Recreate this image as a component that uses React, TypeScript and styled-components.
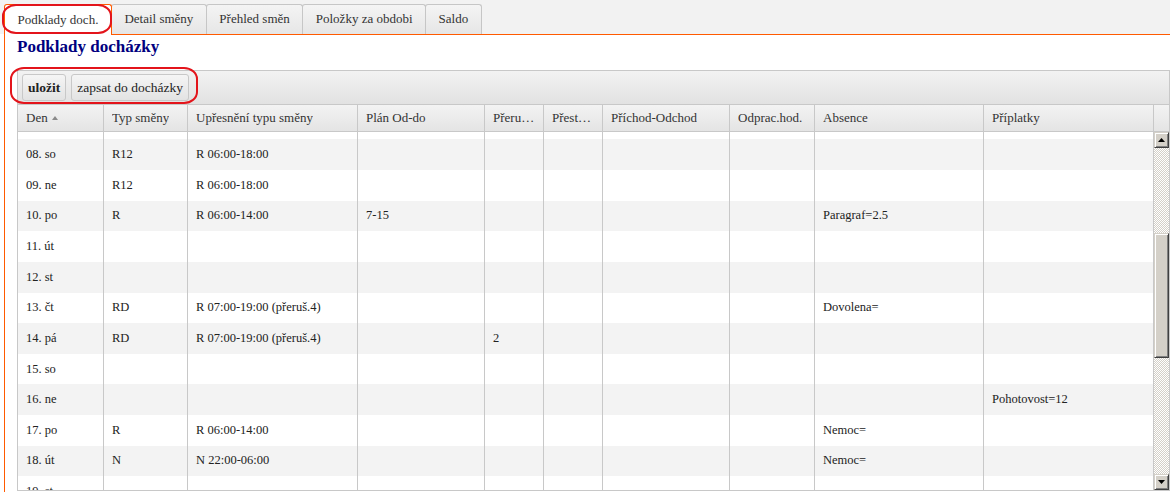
import React, { useLayoutEffect, useRef } from "react";
import styled, { createGlobalStyle } from "styled-components";

const ORANGE = "#ff5a00";
const LINE = "#c8c8c8";
const FONT = `"Liberation Serif", "Times New Roman", serif`;

const GlobalStyle = createGlobalStyle`
  html, body { margin: 0; padding: 0; background: #fff; }
  body { font-family: ${FONT}; color: #222; }
  * { box-sizing: border-box; }
`;

const Page = styled.div`
  position: relative;
  width: 1170px;
  height: 492px;
  overflow: hidden;
  display: flex;
  flex-direction: column;
`;

/* ---------- tabs ---------- */
const TabStrip = styled.div`
  display: flex;
  align-items: flex-end;
  padding: 4px 0 0 4px;
  background: #f2f2f2;
`;

const Tab = styled.div<{ $active?: boolean }>`
  position: relative;
  height: ${(p) => (p.$active ? 31 : 30)}px;
  margin-bottom: ${(p) => (p.$active ? -1 : 0)}px;
  margin-left: ${(p) => (p.$active ? 0 : -1)}px;
  padding: 0 12.5px 1px;
  display: flex;
  align-items: center;
  font-size: 13px;
  color: #333;
  white-space: nowrap;
  border: 1px solid ${(p) => (p.$active ? ORANGE : "#c6c6c6")};
  border-bottom: none;
  border-radius: 3px 3px 0 0;
  background: ${(p) => (p.$active ? "#fff" : "linear-gradient(#f4f4f4, #e6e6e6)")};
  z-index: ${(p) => (p.$active ? 2 : 1)};
  &:first-child { margin-left: 0; }
`;

/* ---------- content panel ---------- */
const Panel = styled.div`
  flex: 1;
  min-height: 0;
  margin-left: 4px;
  border-left: 1px solid ${ORANGE};
  border-top: 1px solid ${ORANGE};
  padding: 2px 0 0 12px;
  display: flex;
  flex-direction: column;
  background: #fff;
`;

const Title = styled.h1`
  margin: 0 0 13px;
  font-size: 17px;
  line-height: 20px;
  font-weight: bold;
  color: #000080;
`;

const Grid = styled.div`
  width: 1153px;
  height: 421px;
  border: 1px solid ${LINE};
  display: flex;
  flex-direction: column;
`;

const Toolbar = styled.div`
  height: 34px;
  padding: 3px 4px 0;
  border-bottom: 1px solid ${LINE};
  background: linear-gradient(#f2f2f2, #e2e2e2);
  display: flex;
  align-items: flex-start;
  gap: 5px;
`;

const Button = styled.button<{ $bold?: boolean }>`
  height: 27px;
  padding: 0 5px;
  border: 1px solid ${LINE};
  border-radius: 3px;
  background: linear-gradient(#f5f5f5, #e3e3e3);
  font-family: ${FONT};
  font-size: 13.5px;
  font-weight: ${(p) => (p.$bold ? "bold" : "normal")};
  color: #222;
  cursor: pointer;
`;

const COLS = "86px 84px 170px 127px 59px 59px 127px 85px 169px 170px";

const HeaderRow = styled.div`
  height: 27px;
  display: grid;
  grid-template-columns: ${COLS} 15px;
  border-bottom: 1px solid ${LINE};
  background: linear-gradient(#f3f3f3, #e4e4e4);
`;

const HeadCell = styled.div`
  border-right: 1px solid ${LINE};
  padding: 0 8px;
  display: flex;
  align-items: center;
  gap: 4px;
  min-width: 0;
  font-size: 13px;
  color: #333;
  &:last-child { border-right: none; }
`;

const HeadLabel = styled.span`
  overflow: hidden;
  white-space: nowrap;
  text-overflow: ellipsis;
`;

const Body = styled.div`
  flex: 1;
  min-height: 0;
  display: flex;
`;

const Rows = styled.div`
  width: 1136px;
  height: 100%;
  overflow: hidden;
`;

const Row = styled.div<{ $alt: boolean }>`
  height: 30.625px;
  display: grid;
  grid-template-columns: ${COLS};
  background: ${(p) => (p.$alt ? "#f3f3f3" : "#fff")};
`;

const Cell = styled.div`
  border-right: 1px solid ${LINE};
  padding: 0 8px;
  display: flex;
  align-items: center;
  min-width: 0;
  overflow: hidden;
  white-space: nowrap;
  font-size: 12.5px;
  color: #222;
`;

/* ---------- classic scrollbar ---------- */
const ScrollBar = styled.div`
  width: 15px;
  display: flex;
  flex-direction: column;
`;

const bevel = `
  background: #d4d0c8;
  border: 1px solid;
  border-color: #d4d0c8 #404040 #404040 #d4d0c8;
  box-shadow: inset 1px 1px 0 #fff, inset -1px -1px 0 #808080;
`;

const ScrollButton = styled.div`
  height: 16px;
  ${bevel}
  display: flex;
  align-items: center;
  justify-content: center;
`;

const Track = styled.div<{ $offset: number }>`
  flex: 1;
  padding-top: ${(p) => p.$offset}px;
  background: repeating-conic-gradient(#d4d0c8 0 25%, #fff 0 50%) 0 0 / 2px 2px;
`;

const Thumb = styled.div<{ $size: number }>`
  height: ${(p) => p.$size}px;
  ${bevel}
`;

/* ---------- marker outlines ---------- */
const Marker = styled.div<{ $x: number; $y: number; $w: number; $h: number }>`
  position: absolute;
  left: ${(p) => p.$x}px;
  top: ${(p) => p.$y}px;
  width: ${(p) => p.$w}px;
  height: ${(p) => p.$h}px;
  border: 2.5px solid #e3141b;
  border-radius: 14px / 12px;
  pointer-events: none;
  z-index: 5;
`;

const Arrow = ({ up }: { up?: boolean }) => (
  <svg width="7" height="4" viewBox="0 0 7 4">
    <polygon points={up ? "3.5,0 7,4 0,4" : "0,0 7,0 3.5,4"} fill="#000" />
  </svg>
);

const SortMark = () => (
  <svg width="6" height="4" viewBox="0 0 6 4">
    <polygon points="3,0 6,4 0,4" fill="#8a8a8a" />
  </svg>
);

type Day = {
  typ?: string;
  upr?: string;
  plan?: string;
  prer?: string;
  prest?: string;
  prichod?: string;
  odprac?: string;
  absence?: string;
  priplatky?: string;
};

const WEEK = ["so", "ne", "po", "út", "st", "čt", "pá"];

const DATA: Record<number, Day> = {
  3: { typ: "R", upr: "R 06:00-14:00" },
  4: { typ: "R", upr: "R 06:00-14:00" },
  5: { typ: "N", upr: "N 22:00-06:00" },
  6: { typ: "N", upr: "N 22:00-06:00" },
  8: { typ: "R12", upr: "R 06:00-18:00" },
  9: { typ: "R12", upr: "R 06:00-18:00" },
  10: { typ: "R", upr: "R 06:00-14:00", plan: "7-15", absence: "Paragraf=2.5" },
  13: { typ: "RD", upr: "R 07:00-19:00 (přeruš.4)", absence: "Dovolena=" },
  14: { typ: "RD", upr: "R 07:00-19:00 (přeruš.4)", prer: "2" },
  16: { priplatky: "Pohotovost=12" },
  17: { typ: "R", upr: "R 06:00-14:00", absence: "Nemoc=" },
  18: { typ: "N", upr: "N 22:00-06:00", absence: "Nemoc=" },
  24: { typ: "R", upr: "R 06:00-14:00" },
  25: { typ: "R", upr: "R 06:00-14:00" },
  26: { typ: "N", upr: "N 22:00-06:00" },
};

const HEADERS = [
  "Den",
  "Typ směny",
  "Upřesnění typu směny",
  "Plán Od-do",
  "Přerušení",
  "Přestávka",
  "Příchod-Odchod",
  "Odprac.hod.",
  "Absence",
  "Příplatky",
];

const TABS = ["Podklady doch.", "Detail směny", "Přehled směn", "Položky za obdobi", "Saldo"];

export default function App() {
  const rowsRef = useRef<HTMLDivElement>(null);

  useLayoutEffect(() => {
    if (rowsRef.current) rowsRef.current.scrollTop = 207;
  }, []);

  const days = Array.from({ length: 31 }, (_, i) => i + 1);

  return (
    <Page>
      <GlobalStyle />
      <TabStrip>
        {TABS.map((t, i) => (
          <Tab key={t} $active={i === 0}>
            {t}
          </Tab>
        ))}
      </TabStrip>

      <Panel>
        <Title>Podklady docházky</Title>
        <Grid>
          <Toolbar>
            <Button $bold>uložit</Button>
            <Button>zapsat do docházky</Button>
          </Toolbar>

          <HeaderRow>
            {HEADERS.map((h, i) => (
              <HeadCell key={h}>
                <HeadLabel>{h}</HeadLabel>
                {i === 0 && <SortMark />}
              </HeadCell>
            ))}
            <HeadCell />
          </HeaderRow>

          <Body>
            <Rows ref={rowsRef}>
              {days.map((d) => {
                const r = DATA[d] || {};
                return (
                  <Row key={d} $alt={d % 2 === 0}>
                    <Cell>{`${String(d).padStart(2, "0")}. ${WEEK[(d - 1) % 7]}`}</Cell>
                    <Cell>{r.typ}</Cell>
                    <Cell>{r.upr}</Cell>
                    <Cell>{r.plan}</Cell>
                    <Cell>{r.prer}</Cell>
                    <Cell>{r.prest}</Cell>
                    <Cell>{r.prichod}</Cell>
                    <Cell>{r.odprac}</Cell>
                    <Cell>{r.absence}</Cell>
                    <Cell>{r.priplatky}</Cell>
                  </Row>
                );
              })}
            </Rows>
            <ScrollBar>
              <ScrollButton>
                <Arrow up />
              </ScrollButton>
              <Track $offset={85}>
                <Thumb $size={125} />
              </Track>
              <ScrollButton>
                <Arrow />
              </ScrollButton>
            </ScrollBar>
          </Body>
        </Grid>
      </Panel>

      <Marker $x={2} $y={4} $w={110} $h={30} />
      <Marker $x={10} $y={67} $w={188} $h={37} />
    </Page>
  );
}
